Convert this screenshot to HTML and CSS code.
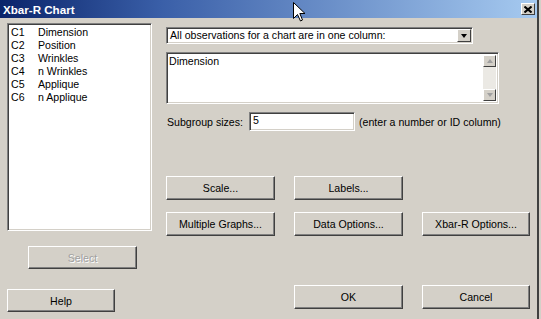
FILE: index.html
```html
<!DOCTYPE html>
<html lang="en">
<head>
    <meta charset="UTF-8">
    <title>Xbar-R Chart</title>
    <link rel="stylesheet" href="styles.css">
</head>
<body>
    <div class="window">
        <div class="titlebar">
            <span class="title">Xbar-R Chart</span>
            <span class="close">
                <svg width="8" height="7" viewBox="0 0 8 7"><path d="M0.5 0.5 L7.5 6.5 M7.5 0.5 L0.5 6.5" stroke="#000" stroke-width="2"/></svg>
            </span>
        </div>
        <div class="content">
            <div class="left">
                <ul class="varlist">
                    <li><span class="col">C1</span>Dimension</li>
                    <li><span class="col">C2</span>Position</li>
                    <li><span class="col">C3</span>Wrinkles</li>
                    <li><span class="col">C4</span>n Wrinkles</li>
                    <li><span class="col">C5</span>Applique</li>
                    <li><span class="col">C6</span>n Applique</li>
                </ul>
                <button class="btn btn-select" disabled>Select</button>
                <button class="btn btn-help">Help</button>
            </div>
            <div class="right">
                <div class="combo">
                    <span class="combo-text">All observations for a chart are in one column:</span>
                    <span class="combo-arrow"><span class="tri-down"></span></span>
                </div>
                <div class="memo">
                    <div class="memo-text">Dimension</div>
                    <div class="scrollbar">
                        <span class="sb-btn"><span class="tri-up small"></span></span>
                        <span class="sb-btn"><span class="tri-down small"></span></span>
                    </div>
                </div>
                <div class="subgroup">
                    <label>Subgroup sizes:</label>
                    <div class="field">5</div>
                    <span class="hint">(enter a number or ID column)</span>
                </div>
                <div class="btn-grid">
                    <button class="btn">Scale...</button>
                    <button class="btn">Labels...</button>
                    <span></span>
                    <button class="btn">Multiple Graphs...</button>
                    <button class="btn">Data Options...</button>
                    <button class="btn">Xbar-R Options...</button>
                </div>
                <div class="btn-grid actions">
                    <span></span>
                    <button class="btn">OK</button>
                    <button class="btn">Cancel</button>
                </div>
            </div>
        </div>
        <svg class="cursor" width="13" height="20" viewBox="0 0 13 20">
            <path d="M0.5 0.5 L0.5 16.5 L4.5 12.5 L7.5 19 L9.5 18 L6.8 11.5 L12 11.5 Z" fill="#fff" stroke="#000" stroke-width="1"/>
        </svg>
    </div>
</body>
</html>
```

FILE: styles.css
```css
body {
    margin: 0;
    background: #d4d0c8;
}
.window {
    position: relative;
    width: 537px;
    height: 319px;
    background: #d4d0c8;
    border-right: 2px solid #404040;
    font-family: "Liberation Sans", Arial, sans-serif;
    font-size: 10.6px;
    color: #000;
    overflow: hidden;
}
.titlebar {
    height: 18px;
    background: linear-gradient(to right, #0a246a, #3a5fa8 30%, #a6caf0);
    display: flex;
    align-items: center;
    justify-content: space-between;
    padding: 0 2px 0 3px;
}
.title {
    color: #fff;
    font-weight: bold;
    font-size: 11.6px;
}
.close {
    width: 12px;
    height: 10px;
    background: #d4d0c8;
    border: 1px solid;
    border-color: #fff #404040 #404040 #fff;
    display: flex;
    align-items: center;
    justify-content: center;
}
.content {
    display: flex;
}
.left {
    width: 166px;
    padding-left: 7px;
    box-sizing: border-box;
    display: flex;
    flex-direction: column;
    align-items: flex-start;
}
.varlist {
    margin: 5px 0 0;
    width: 145px;
    height: 208px;
    box-sizing: border-box;
    list-style: none;
    padding: 2px 0 0 1px;
    background: #fff;
    border: 1px solid;
    border-color: #808080 #fff #fff #808080;
    box-shadow: inset 1px 1px #404040, inset -1px -1px #d4d0c8;
}
.varlist li {
    line-height: 13px;
    padding-left: 2px;
}
.col {
    display: inline-block;
    width: 27px;
}
.btn {
    height: 24px;
    padding: 0;
    background: #d4d0c8;
    border: 1px solid;
    border-color: #fff #404040 #404040 #fff;
    box-shadow: inset -1px -1px #808080;
    font-family: "Liberation Sans", Arial, sans-serif;
    font-size: 10.6px;
    color: #000;
}
.btn-select {
    margin: 15px 0 0 21px;
    width: 109px;
    height: 23px;
    color: #a0a0a0;
    text-shadow: 1px 1px #fff;
}
.btn-help {
    margin-top: 20px;
    width: 108px;
    height: 23px;
}
.right {
    padding-top: 9px;
}
.combo {
    width: 307px;
    height: 17px;
    box-sizing: border-box;
    display: flex;
    background: #fff;
    border: 1px solid;
    border-color: #808080 #fff #fff #808080;
    box-shadow: inset 1px 1px #404040, inset -1px -1px #d4d0c8;
    padding: 1px;
}
.combo-text {
    flex: 1;
    line-height: 13px;
    padding-left: 2px;
}
.combo-arrow {
    width: 14px;
    box-sizing: border-box;
    background: #d4d0c8;
    border: 1px solid;
    border-color: #fff #404040 #404040 #fff;
    display: flex;
    align-items: center;
    justify-content: center;
}
.tri-down {
    width: 0;
    height: 0;
    border-left: 3.5px solid transparent;
    border-right: 3.5px solid transparent;
    border-top: 4px solid #000;
}
.tri-up {
    width: 0;
    height: 0;
    border-left: 3.5px solid transparent;
    border-right: 3.5px solid transparent;
    border-bottom: 4px solid #000;
}
.small {
    border-left-width: 3px;
    border-right-width: 3px;
    border-top-color: #a0a0a0;
    border-bottom-color: #a0a0a0;
}
.memo {
    margin-top: 8px;
    width: 333px;
    height: 52px;
    box-sizing: border-box;
    display: flex;
    background: #fff;
    border: 1px solid;
    border-color: #808080 #fff #fff #808080;
    box-shadow: inset 1px 1px #404040, inset -1px -1px #d4d0c8;
    padding: 2px;
}
.memo-text {
    flex: 1;
    line-height: 13px;
    padding-left: 0;
}
.scrollbar {
    width: 13px;
    background: #ebe9e4;
    display: flex;
    flex-direction: column;
    justify-content: space-between;
}
.sb-btn {
    height: 12px;
    box-sizing: border-box;
    background: #d4d0c8;
    border: 1px solid;
    border-color: #fff #404040 #404040 #fff;
    display: flex;
    align-items: center;
    justify-content: center;
}
.subgroup {
    margin-top: 8px;
    height: 19px;
    display: flex;
    align-items: center;
}
.subgroup label {
    padding-left: 1px;
    width: 82px;
}
.field {
    width: 106px;
    height: 19px;
    box-sizing: border-box;
    background: #fff;
    border: 1px solid;
    border-color: #808080 #fff #fff #808080;
    box-shadow: inset 1px 1px #404040, inset -1px -1px #d4d0c8;
    padding: 1px 0 0 3px;
    line-height: 13px;
}
.hint {
    margin-left: 4px;
}
.btn-grid {
    margin-top: 45px;
    display: grid;
    grid-template-columns: 109px 109px 108px;
    column-gap: 19px;
    row-gap: 12px;
}
.btn-grid .btn {
    width: 100%;
}
.actions {
    margin-top: 49px;
}
.cursor {
    position: absolute;
    left: 293px;
    top: 2px;
}
```
